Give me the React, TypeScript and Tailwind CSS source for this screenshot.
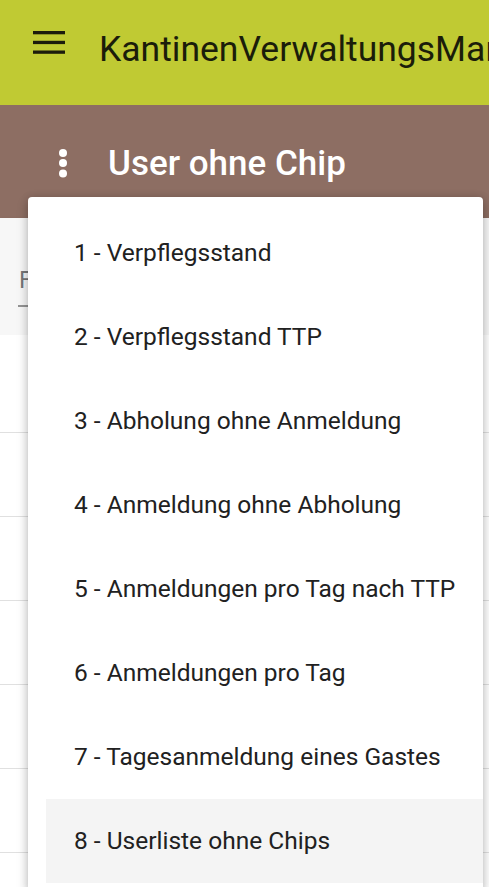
const reports = [
  '1 - Verpflegsstand',
  '2 - Verpflegsstand TTP',
  '3 - Abholung ohne Anmeldung',
  '4 - Anmeldung ohne Abholung',
  '5 - Anmeldungen pro Tag nach TTP',
  '6 - Anmeldungen pro Tag',
  '7 - Tagesanmeldung eines Gastes',
  '8 - Userliste ohne Chips',
];

function MenuIcon() {
  return (
    <svg width="32" height="24" viewBox="0 0 32 24" className="text-[#1c1c0c]">
      <rect x="0" y="0" width="32" height="3.3" fill="currentColor" />
      <rect x="0" y="9.8" width="32" height="3.3" fill="currentColor" />
      <rect x="0" y="19.5" width="32" height="3.3" fill="currentColor" />
    </svg>
  );
}

function DotsIcon() {
  return (
    <svg width="10" height="30" viewBox="0 0 10 30" className="text-white">
      <circle cx="5" cy="4" r="4" fill="currentColor" />
      <circle cx="5" cy="14" r="4" fill="currentColor" />
      <circle cx="5" cy="24.5" r="4" fill="currentColor" />
    </svg>
  );
}

export default function App() {
  return (
    <div className="relative h-[887px] overflow-hidden bg-[#fafafa] font-['Roboto',sans-serif]">
      {/* App bar */}
      <header className="h-[105px] bg-[#c0ca33] flex items-start overflow-hidden">
        <div className="ml-[33px] mt-[31px]">
          <MenuIcon />
        </div>
        <h1 className="ml-[34px] mt-[32px] text-[35.5px] leading-none font-normal text-[#1b1d0a] whitespace-nowrap">
          KantinenVerwaltungsManager
        </h1>
      </header>

      {/* Page toolbar */}
      <div className="h-[113px] bg-[#8d6e63] flex items-start">
        <div className="ml-[58px] mt-[44px]">
          <DotsIcon />
        </div>
        <h2 className="ml-[40px] mt-[41px] text-[35px] leading-none font-medium text-white whitespace-nowrap">
          User ohne Chip
        </h2>
      </div>

      {/* Filter card */}
      <div className="h-[117px] bg-[#f7f7f7] shadow-[0_2px_4px_rgba(0,0,0,0.12)] px-[18px] pt-[50px]">
        <div className="w-[220px] border-b-2 border-[#949494] pb-[13px]">
          <span className="block pl-px text-[24px] leading-none text-[#777777]">Filter</span>
        </div>
      </div>

      {/* Table rows */}
      <div className="bg-white">
        <div className="h-[98px] border-b border-[#e0e0e0]" />
        {reports.slice(0, 6).map((r) => (
          <div key={r} className="h-[84px] border-b border-[#e0e0e0]" />
        ))}
      </div>

      {/* Report menu */}
      <div className="absolute left-[28px] top-[197px] w-[455px] bg-white rounded-[4px] shadow-[0_5px_12px_rgba(0,0,0,0.22),0_0_8px_rgba(0,0,0,0.12)] pt-[14px] pb-[8px] pl-[18px]">
        {reports.map((r, i) => (
          <div
            key={r}
            className={`h-[84px] flex items-center pl-[28px] text-[24.5px] leading-none text-[#212121] whitespace-nowrap ${
              i === reports.length - 1 ? 'bg-[#f4f4f4]' : ''
            }`}
          >
            {r}
          </div>
        ))}
      </div>
    </div>
  );
}
